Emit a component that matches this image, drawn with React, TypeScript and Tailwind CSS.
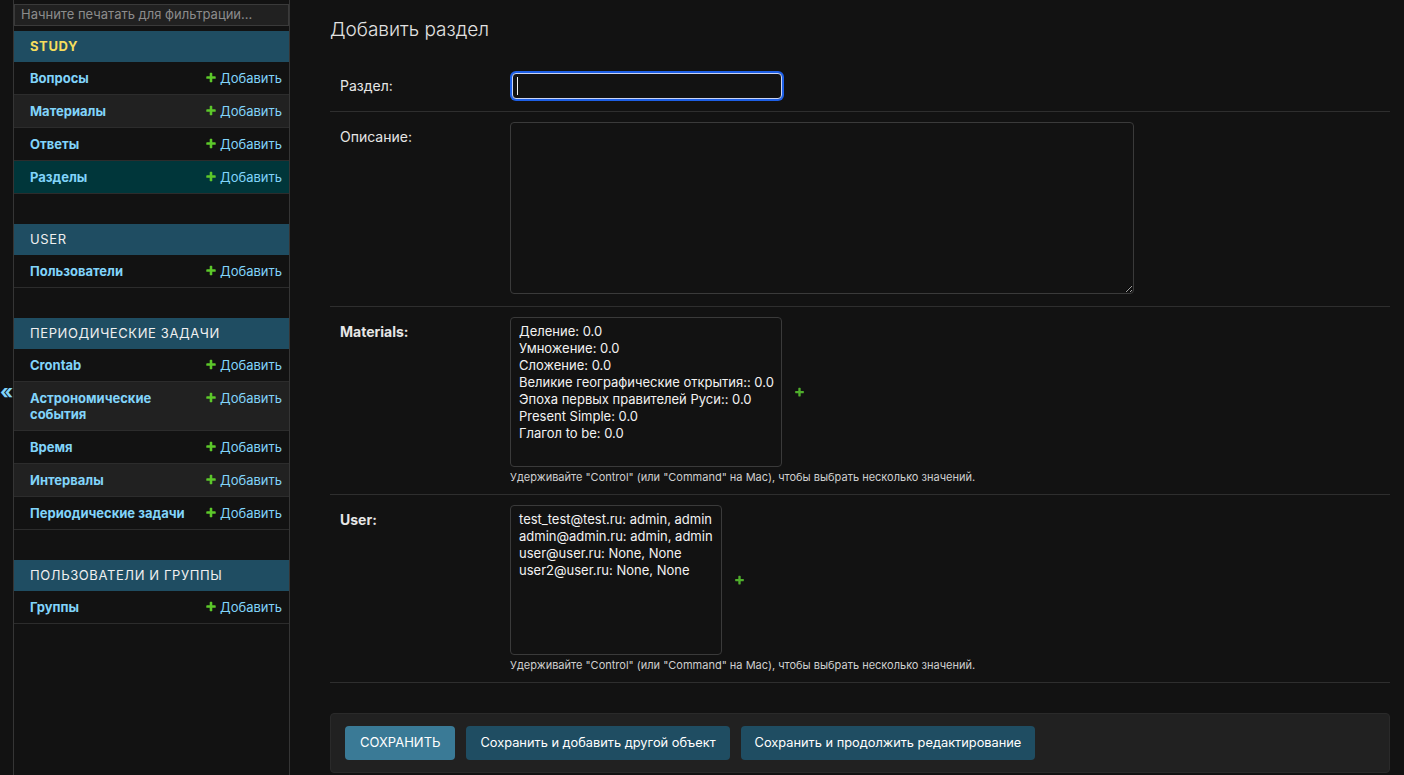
import React from "react";

type Row = { name: string; bg?: "alt" | "sel" | "none" };
type Section = { title: string; current?: boolean; rows: Row[] };

const sections: Section[] = [
  {
    title: "Study",
    current: true,
    rows: [
      { name: "Вопросы" },
      { name: "Материалы", bg: "alt" },
      { name: "Ответы" },
      { name: "Разделы", bg: "sel" },
    ],
  },
  { title: "User", rows: [{ name: "Пользователи" }] },
  {
    title: "Периодические задачи",
    rows: [
      { name: "Crontab" },
      { name: "Астрономические события", bg: "alt" },
      { name: "Время" },
      { name: "Интервалы", bg: "alt" },
      { name: "Периодические задачи" },
    ],
  },
  { title: "Пользователи и группы", rows: [{ name: "Группы" }] },
];

function PlusIcon({ className, color }: { className?: string; color: string }) {
  return (
    <svg viewBox="0 0 1792 1792" className={className} aria-hidden="true">
      <path
        fill={color}
        d="M1600 736v192q0 40-28 68t-68 28h-416v416q0 40-28 68t-68 28h-192q-40 0-68-28t-28-68v-416h-416q-40 0-68-28t-28-68v-192q0-40 28-68t68-28h416v-416q0-40 28-68t68-28h192q40 0 68 28t28 68v416h416q40 0 68 28t28 68z"
      />
    </svg>
  );
}

function SideRow({ row }: { row: Row }) {
  const bg =
    row.bg === "alt" ? "bg-[#212121]" : row.bg === "sel" ? "bg-[#00363a]" : "bg-[#121212]";
  return (
    <div className={`flex items-start border-b border-[#2c2c2c] ${bg}`}>
      <div className="w-[185px] shrink-0 py-2 pl-4 pr-2 text-[13px] font-bold leading-4 text-[#81d4fa]">
        {row.name}
      </div>
      <div className="flex flex-1 items-center justify-end gap-[3px] py-2 pr-[7px] text-[13px] leading-4 text-[#81d4fa]">
        <PlusIcon className="h-[12px] w-[12px]" color="#5cc82a" />
        <span>Добавить</span>
      </div>
    </div>
  );
}

function SideSection({ s }: { s: Section }) {
  return (
    <div className="mb-[30px]">
      <div
        className={`flex h-[31px] items-center bg-[#1f4d62] pl-4 text-[13px] uppercase tracking-[0.6px] ${
          s.current ? "font-bold text-[#f5dd5d]" : "font-normal text-[#f0f0f0]"
        }`}
      >
        {s.title}
      </div>
      {s.rows.map((r) => (
        <SideRow key={r.name} row={r} />
      ))}
    </div>
  );
}

const helpText =
  'Удерживайте "Control" (или "Command" на Mac), чтобы выбрать несколько значений.';

function MultiSelect({ items, width }: { items: string[]; width: string }) {
  return (
    <div
      className={`${width} h-[150px] rounded-[4px] border border-[#3a3a3a] bg-[#121212] pl-2 pt-[5px] text-[13px] leading-[17px] text-[#f2f2f2]`}
    >
      {items.map((i) => (
        <div key={i} className="whitespace-nowrap">
          {i}
        </div>
      ))}
    </div>
  );
}

export default function App() {
  return (
    <div className="flex h-[775px] overflow-hidden bg-[#121212] font-['Inter','Liberation_Sans',sans-serif] text-[#eeeeee]">
      {/* toggle */}
      <div className="flex w-[14px] shrink-0 justify-center border-r border-[#353535] pt-[380px]">
        <span className="text-[20px] font-bold leading-6 text-[#81d4fa]">«</span>
      </div>

      {/* sidebar */}
      <nav className="w-[276px] shrink-0 border-r border-[#353535]">
        <div className="mb-[5px] mt-1 flex h-[22px] items-center border border-[#3a3a3a] bg-[#212121] pl-[6px] text-[13px] text-[#8c8c8c]">
          Начните печатать для фильтрации...
        </div>
        {sections.map((s) => (
          <SideSection key={s.title} s={s} />
        ))}
      </nav>

      {/* main */}
      <main className="flex-1 pl-10 pr-[14px] pt-[18px]">
        <h1 className="mb-[19px] text-[19px] font-light leading-6 text-[#e2e2e2]">
          Добавить раздел
        </h1>

        <div className="flex border-b border-[#2e2e2e] p-[10px]">
          <label className="w-[170px] shrink-0 pt-[7px] text-[14px] leading-4 text-[#e6e6e6]">
            Раздел:
          </label>
          <div className="h-[30px] w-[274px] p-[2px]">
            <div className="flex h-[26px] w-[270px] items-center rounded-[4px] border border-[#c9d4f5] bg-[#121212] shadow-[0_0_0_2px_#1d5fe6]">
              <div className="ml-[4px] h-[18px] w-px bg-[#f0f0f0]" />
            </div>
          </div>
        </div>

        <div className="flex border-b border-[#2e2e2e] px-[10px] pb-3 pt-[10px]">
          <label className="w-[170px] shrink-0 pt-[7px] text-[14px] leading-4 text-[#e6e6e6]">
            Описание:
          </label>
          <textarea className="block h-[172px] w-[624px] rounded-[4px] border border-[#3a3a3a] bg-[#121212] [color-scheme:dark] outline-none" />
        </div>

        <div className="flex border-b border-[#2e2e2e] p-[10px]">
          <label className="w-[170px] shrink-0 pt-[7px] text-[14px] font-bold leading-4 text-[#e6e6e6]">
            Materials:
          </label>
          <div>
            <div className="flex items-center">
              <MultiSelect
                width="w-[272px]"
                items={[
                  "Деление: 0.0",
                  "Умножение: 0.0",
                  "Сложение: 0.0",
                  "Великие географические открытия:: 0.0",
                  "Эпоха первых правителей Руси:: 0.0",
                  "Present Simple: 0.0",
                  "Глагол to be: 0.0",
                ]}
              />
              <PlusIcon className="ml-[12px] h-[11px] w-[11px]" color="#4fae2c" />
            </div>
            <div className="mt-[3px] whitespace-nowrap text-[11px] leading-[14px] text-[#cfcfcf]">
              {helpText}
            </div>
          </div>
        </div>

        <div className="flex border-b border-[#2e2e2e] p-[10px]">
          <label className="w-[170px] shrink-0 pt-[7px] text-[14px] font-bold leading-4 text-[#e6e6e6]">
            User:
          </label>
          <div>
            <div className="flex items-center">
              <MultiSelect
                width="w-[212px]"
                items={[
                  "test_test@test.ru: admin, admin",
                  "admin@admin.ru: admin, admin",
                  "user@user.ru: None, None",
                  "user2@user.ru: None, None",
                ]}
              />
              <PlusIcon className="ml-[12px] h-[11px] w-[11px]" color="#4fae2c" />
            </div>
            <div className="mt-[3px] whitespace-nowrap text-[11px] leading-[14px] text-[#cfcfcf]">
              {helpText}
            </div>
          </div>
        </div>

        <div className="mt-[30px] flex h-[60px] items-start gap-[11px] rounded-[4px] border border-[#2a2a2a] bg-[#212121] px-[14px] pt-[12px]">
          <button className="h-[34px] rounded-[4px] bg-[#3a7a96] px-[15px] text-[13px] text-white">
            СОХРАНИТЬ
          </button>
          <button className="h-[34px] rounded-[4px] bg-[#1f4d62] px-[14px] text-[12.8px] text-white">
            Сохранить и добавить другой объект
          </button>
          <button className="h-[34px] rounded-[4px] bg-[#1f4d62] px-[14px] text-[12.8px] text-white">
            Сохранить и продолжить редактирование
          </button>
        </div>
      </main>
    </div>
  );
}
